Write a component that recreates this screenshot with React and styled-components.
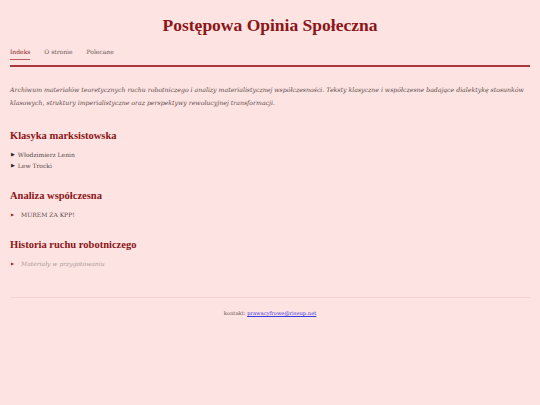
import React from 'react';
import styled, { createGlobalStyle } from 'styled-components';

const GlobalStyle = createGlobalStyle`
  html, body {
    margin: 0;
    padding: 0;
    background: #fde3e1;
  }
  body {
    font-family: "DejaVu Serif", "Liberation Serif", serif;
    color: #4a4040;
  }
`;

const Page = styled.div`
  padding: 0 10px;
`;

const Header = styled.header`
  padding-top: 14px;
  border-bottom: 2px solid #a8383a;
`;

const Title = styled.h1`
  margin: 0;
  text-align: center;
  font-family: "Liberation Serif", serif;
  font-size: 17.5px;
  line-height: 22px;
  font-weight: bold;
  color: #8b1518;
`;

const Nav = styled.nav`
  display: flex;
  gap: 14px;
  margin-top: 11px;
  padding-bottom: 5px;
`;

const NavItem = styled.a`
  font-size: 6px;
  line-height: 10px;
  padding-bottom: 2px;
  color: ${(p) => (p.$active ? '#8b1518' : '#6a5656')};
  border-bottom: 1px solid ${(p) => (p.$active ? '#c05a5e' : 'transparent')};
  text-decoration: none;
`;

const Intro = styled.p`
  margin: 16px 0 0;
  font-style: italic;
  font-size: 6.2px;
  line-height: 13px;
  color: #5a4c4c;
`;

const Section = styled.section`
  margin-top: ${(p) => p.$top || 18}px;
`;

const Heading = styled.h2`
  margin: 0;
  font-family: "Liberation Serif", serif;
  font-size: 10.5px;
  line-height: 14px;
  font-weight: bold;
  color: #8b1518;
`;

const List = styled.ul`
  list-style: none;
  margin: 6px 0 0;
  padding: 0;
`;

const Item = styled.li`
  display: flex;
  align-items: center;
  gap: ${(p) => (p.$dark ? 3 : 7)}px;
  font-size: 6px;
  line-height: 11px;
  color: ${(p) => (p.$muted ? '#a89a9a' : '#514646')};
  font-style: ${(p) => (p.$muted ? 'italic' : 'normal')};
  &::before {
    content: '▶';
    font-style: normal;
    font-size: ${(p) => (p.$dark ? 5 : 4)}px;
    color: ${(p) => (p.$dark ? '#2a2222' : '#9a2226')};
    padding-left: 1px;
  }
`;

const Footer = styled.footer`
  margin-top: 28px;
  border-top: 1px solid #f5d3d1;
  padding-top: 10px;
  text-align: center;
  font-size: 5.2px;
  line-height: 10px;
  color: #6a5a5a;
`;

const Mail = styled.a`
  color: #3a3ae0;
  text-decoration: underline;
`;

export default function App() {
  return (
    <>
      <GlobalStyle />
      <Page>
        <Header>
          <Title>Postępowa Opinia Społeczna</Title>
          <Nav>
            <NavItem $active>Indeks</NavItem>
            <NavItem>O stronie</NavItem>
            <NavItem>Polecane</NavItem>
          </Nav>
        </Header>
        <Intro>
          Archiwum materiałów teoretycznych ruchu robotniczego i analizy materialistycznej współczesności.
          Teksty klasyczne i współczesne badające dialektykę stosunków klasowych, struktury imperialistyczne
          oraz perspektywy rewolucyjnej transformacji.
        </Intro>
        <Section $top={20}>
          <Heading>Klasyka marksistowska</Heading>
          <List>
            <Item $dark>Włodzimierz Lenin</Item>
            <Item $dark>Lew Trocki</Item>
          </List>
        </Section>
        <Section>
          <Heading>Analiza współczesna</Heading>
          <List>
            <Item>MUREM ZA KPP!</Item>
          </List>
        </Section>
        <Section>
          <Heading>Historia ruchu robotniczego</Heading>
          <List>
            <Item $muted>Materiały w przygotowaniu</Item>
          </List>
        </Section>
        <Footer>
          kontakt: <Mail href="#">prawacyfrowe@riseup.net</Mail>
        </Footer>
      </Page>
    </>
  );
}
